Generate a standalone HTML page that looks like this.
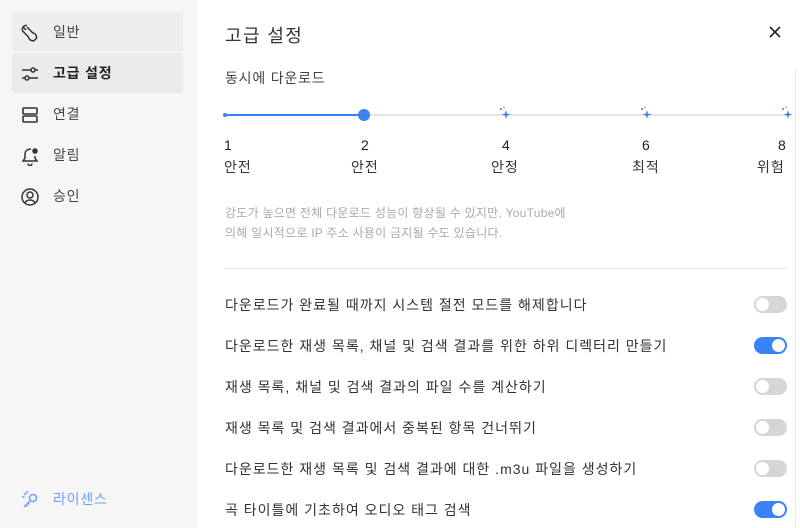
<!DOCTYPE html>
<html><head><meta charset="utf-8"><style>
*{margin:0;padding:0;box-sizing:border-box}
body{width:800px;height:528px;overflow:hidden;background:#fff;font-family:"Liberation Sans","Noto Sans CJK KR",sans-serif;color:#333;position:relative}
.side{position:absolute;left:0;top:0;width:197px;height:528px;background:#f6f6f6}
.item{position:absolute;left:12px;width:171px;height:40px;border-radius:4px;font-size:14px;color:#444;display:flex;align-items:center;letter-spacing:.8px}
.item svg{position:absolute;left:8px;top:11px}
.item span{position:absolute;left:41px}
.a{position:absolute;white-space:nowrap}
.tg{position:absolute;left:754px;width:33px;height:17px;border-radius:9px;background:#d6d6d6}
.tg::after{content:"";position:absolute;left:2px;top:2px;width:13px;height:13px;border-radius:50%;background:#fff}
.tg.on{background:#3b82f6}
.tg.on::after{left:18px}
.row{position:absolute;left:225px;font-size:14px;color:#333;letter-spacing:1px;white-space:nowrap}
.spark{position:absolute}
</style></head><body>
<div class="side">
<div class="item" style="top:12px;background:#eeeeee"><svg width="20" height="20" viewBox="0 0 20 20" fill="none" stroke="#333" stroke-width="1.5" stroke-linejoin="round"><path d="M7 2.5a4 4 0 0 0-4.3 5.6L8.5 14c.2 1 1 3 3 3.5l2.2.5 3-3-.5-2.2c-.5-2-2.5-2.8-3.5-3L7 4"/><path d="M3.5 4.5 6 7"/></svg><span>일반</span></div>
<div class="item" style="top:53px;background:#ebebeb;font-weight:bold;color:#222"><svg width="20" height="20" viewBox="0 0 20 20" fill="none" stroke="#333" stroke-width="1.5"><path d="M2 6h9M15 6h3M2 14h3M9 14h9"/><circle cx="13" cy="6" r="2"/><circle cx="7" cy="14" r="2"/></svg><span>고급 설정</span></div>
<div class="item" style="top:94px"><svg width="20" height="20" viewBox="0 0 20 20" fill="none" stroke="#333" stroke-width="1.6"><rect x="3" y="3" width="14" height="6" rx="1"/><rect x="3" y="11" width="14" height="6" rx="1"/></svg><span>연결</span></div>
<div class="item" style="top:135px"><svg width="20" height="20" viewBox="0 0 20 20" fill="none" stroke="#333" stroke-width="1.5"><path d="M11 3.2A5 5 0 0 0 5 8v4l-2 3h14l-2-3V10"/><path d="M8 17.5a2 2 0 0 0 4 0"/><circle cx="15" cy="5" r="2" fill="#333"/></svg><span>알림</span></div>
<div class="item" style="top:176px"><svg width="20" height="20" viewBox="0 0 20 20" fill="none" stroke="#333" stroke-width="1.5"><circle cx="10" cy="10" r="8"/><circle cx="10" cy="8" r="3"/><path d="M4.8 16c1.2-2.2 3-3 5.2-3s4 .8 5.2 3"/></svg><span>승인</span></div>
<div class="item" style="top:479px;color:#6ea0f5"><svg width="20" height="20" viewBox="0 0 20 20" fill="none" stroke="#6ea0f5" stroke-width="1.5"><circle cx="13" cy="8" r="3.5"/><path d="M10.5 10.5 4 17M6 15l1.5 1.5M8 13l1.5 1.5"/><path d="M4 3l2 2M2 7h2.5M7 1v2.5"/></svg><span>라이센스</span></div>
</div>
<div class="a" style="left:225px;top:22px;font-size:18px;color:#333;letter-spacing:1.4px">고급 설정</div>
<svg class="a" style="left:769px;top:26px" width="12" height="12" viewBox="0 0 12 12" stroke="#222" stroke-width="1.6"><path d="M1 1l10 10M11 1 1 11"/></svg>
<div style="position:absolute;left:795px;top:68px;width:1px;height:460px;background:#eaeaea"></div>
<div class="a" style="left:225px;top:68px;font-size:14px;color:#444;letter-spacing:.8px">동시에 다운로드</div>
<div style="position:absolute;left:225px;top:114px;width:562px;height:2px;background:#e6e6e6"></div>
<div style="position:absolute;left:225px;top:114px;width:139px;height:2px;background:#3b82f6"></div>
<div style="position:absolute;left:223px;top:113px;width:4px;height:4px;border-radius:50%;background:#3b82f6"></div>
<div style="position:absolute;left:358px;top:109px;width:12px;height:12px;border-radius:50%;background:#3b82f6"></div>
<svg class="spark" style="left:498px;top:106px" width="14" height="14" viewBox="0 0 14 14" fill="#3b82f6"><path d="M8 4l1 3.5 3.5 1-3.5 1L8 13l-1-3.5-3.5-1 3.5-1z"/><circle cx="3" cy="3" r="1"/><circle cx="6" cy="1.5" r=".7"/></svg>
<svg class="spark" style="left:639px;top:106px" width="14" height="14" viewBox="0 0 14 14" fill="#3b82f6"><path d="M8 4l1 3.5 3.5 1-3.5 1L8 13l-1-3.5-3.5-1 3.5-1z"/><circle cx="3" cy="3" r="1"/><circle cx="6" cy="1.5" r=".7"/></svg>
<svg class="spark" style="left:780px;top:106px" width="14" height="14" viewBox="0 0 14 14" fill="#3b82f6"><path d="M8 4l1 3.5 3.5 1-3.5 1L8 13l-1-3.5-3.5-1 3.5-1z"/><circle cx="3" cy="3" r="1"/><circle cx="6" cy="1.5" r=".7"/></svg>
<div class="a" style="left:224px;top:137px;font-size:14px;color:#222">1</div>
<div class="a" style="left:361px;top:137px;font-size:14px;color:#222">2</div>
<div class="a" style="left:502px;top:137px;font-size:14px;color:#222">4</div>
<div class="a" style="left:642px;top:137px;font-size:14px;color:#222">6</div>
<div class="a" style="left:778px;top:137px;font-size:14px;color:#222">8</div>
<div class="a" style="left:224px;top:157px;font-size:14px;color:#333;letter-spacing:1px">안전</div>
<div class="a" style="left:351px;top:157px;font-size:14px;color:#333;letter-spacing:1px">안전</div>
<div class="a" style="left:491px;top:157px;font-size:14px;color:#333;letter-spacing:1px">안정</div>
<div class="a" style="left:632px;top:157px;font-size:14px;color:#333;letter-spacing:1px">최적</div>
<div class="a" style="left:757px;top:157px;font-size:14px;color:#333;letter-spacing:1px">위험</div>
<div class="a" style="left:225px;top:203px;font-size:12px;color:#aaa;line-height:20px;letter-spacing:.25px">강도가 높으면 전체 다운로드 성능이 향상될 수 있지만, YouTube에<br>의해 일시적으로 IP 주소 사용이 금지될 수도 있습니다.</div>
<div style="position:absolute;left:225px;top:268px;width:562px;height:1px;background:#e8e8e8"></div>
<div class="row" style="top:295px">다운로드가 완료될 때까지 시스템 절전 모드를 해제합니다</div><div class="tg" style="top:296px"></div>
<div class="row" style="top:336px">다운로드한 재생 목록, 채널 및 검색 결과를 위한 하위 디렉터리 만들기</div><div class="tg on" style="top:337px"></div>
<div class="row" style="top:377px">재생 목록, 채널 및 검색 결과의 파일 수를 계산하기</div><div class="tg" style="top:378px"></div>
<div class="row" style="top:418px">재생 목록 및 검색 결과에서 중복된 항목 건너뛰기</div><div class="tg" style="top:419px"></div>
<div class="row" style="top:459px">다운로드한 재생 목록 및 검색 결과에 대한 .m3u 파일을 생성하기</div><div class="tg" style="top:460px"></div>
<div class="row" style="top:500px">곡 타이틀에 기초하여 오디오 태그 검색</div><div class="tg on" style="top:501px"></div>
</body></html>
